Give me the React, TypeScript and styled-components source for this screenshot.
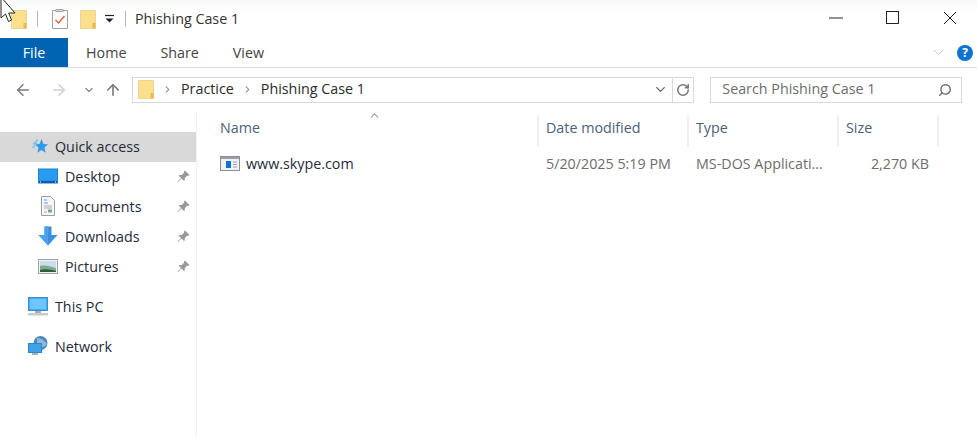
import styled, { createGlobalStyle } from 'styled-components';
import { ArrowLeft, ArrowRight, ArrowUp, ChevronDown, ChevronRight, ChevronUp, RotateCw, Search } from 'lucide-react';

const Global = createGlobalStyle`
  html, body { margin: 0; padding: 0; background: #fff; }
  body { font-family: "Open Sans", "Noto Sans", sans-serif; overflow: hidden; }
`;

const Window = styled.div`
  position: relative;
  width: 977px;
  height: 437px;
  overflow: hidden;
  color: #1c1c1c;
  font-size: 14.3px;
`;

const TitleBar = styled.div`
  height: 38px;
  display: flex;
  align-items: center;
  padding-left: 11px;
  background: linear-gradient(#f7fbf8, #fff 12px);
`;

const Sep = styled.span<{ $m: number }>`
  width: 1px;
  height: 16px;
  background: #b4b4b4;
  margin: 0 ${(p) => p.$m}px;
`;

const ToolSlot = styled.span<{ $w: number }>`
  width: ${(p) => p.$w}px;
  flex: none;
`;

const ToolDrop = styled.svg`
  margin-left: 8px;
`;

const Title = styled.span`
  color: #333;
  flex: 1;
  margin-bottom: 2px;
`;

const WinButtons = styled.div`
  display: flex;
  align-self: flex-start;
  height: 36px;
  align-items: center;
  margin-right: -1px;
`;

const WinButton = styled.div`
  width: 57px;
  display: flex;
  justify-content: center;
`;

const Ribbon = styled.div`
  height: 29px;
  display: flex;
  align-items: stretch;
  border-bottom: 1px solid #dadbdc;
`;

const FileTab = styled.div`
  width: 68px;
  margin-right: 1px;
  background: #0063b1;
  color: #fff;
  display: flex;
  align-items: center;
  justify-content: center;
  padding-bottom: 1px;
  height: 28px;
`;

const Tab = styled.div`
  padding: 0 17px 1px;
  display: flex;
  align-items: center;
  color: #444;
`;

const RibbonEnd = styled.div`
  margin-left: auto;
  display: flex;
  align-items: center;
  gap: 10px;
  padding-right: 4px;
`;

const Help = styled.span`
  width: 16px;
  height: 16px;
  border-radius: 50%;
  background: #0f72cf;
  color: #fff;
  font-size: 12px;
  font-weight: 700;
  line-height: 16px;
  text-align: center;
`;

const NavRow = styled.div`
  height: 43px;
  display: flex;
  align-items: center;
  padding: 0 15px 2px 14px;
`;

const NavIcons = styled.div`
  width: 118px;
  display: flex;
  align-items: center;
`;

const NavSlot = styled.span<{ $w: number }>`
  width: ${(p) => p.$w}px;
  display: flex;
`;

const AddressBox = styled.div`
  width: 563px;
  height: 26px;
  border: 1px solid #d9d9d9;
  display: flex;
  align-items: center;
  padding-left: 5px;
  box-sizing: border-box;
`;

const Crumb = styled.span`
  color: #2b2b2b;
  margin: 0 8px 2px;
`;

const AddressEnd = styled.div`
  margin-left: auto;
  display: flex;
  align-items: center;
  height: 100%;
`;

const RefreshCell = styled.span`
  width: 20px;
  height: 100%;
  border-left: 1px solid #d9d9d9;
  display: flex;
  align-items: center;
  justify-content: center;
  margin-left: 4px;
`;

const SearchBox = styled.div`
  width: 252px;
  height: 26px;
  margin-left: 16px;
  border: 1px solid #d9d9d9;
  box-sizing: border-box;
  display: flex;
  align-items: center;
  justify-content: space-between;
  padding: 0 9px 0 11px;
  color: #6d6d6d;
`;

const SearchText = styled.span`
  margin-bottom: 2px;
`;

const Body = styled.div`
  display: flex;
  height: 327px;
`;

const Sidebar = styled.div`
  width: 196px;
  border-right: 1px solid #f0f0f0;
  padding-top: 19px;
  flex: none;
`;

const NavGroup = styled.div`
  margin-bottom: 10px;
`;

const NavItem = styled.div<{ $active?: boolean; $indent: number }>`
  height: 30px;
  display: flex;
  align-items: center;
  padding-left: ${(p) => p.$indent}px;
  padding-right: 6px;
  padding-bottom: 2px;
  box-sizing: border-box;
  background: ${(p) => (p.$active ? '#d9d9d9' : 'transparent')};
  color: #1f2a3a;
  svg.nav-icon { margin-right: 7px; flex: none; }
`;

const Pin = styled.span`
  margin-left: auto;
  display: flex;
`;

const Content = styled.div`
  flex: 1;
  position: relative;
`;

const Columns = styled.div`
  display: grid;
  grid-template-columns: 326px 150px 150px 100px;
  margin-left: 16px;
`;

const HeaderRow = styled(Columns)`
  height: 32px;
  margin-top: 2px;
  align-items: stretch;
`;

const HeaderCell = styled.div`
  display: flex;
  align-items: center;
  padding: 0 0 8px 7px;
  color: #4c607a;
  border-right: 2px solid #f0f0f0;
`;

const SortArrow = styled.span`
  position: absolute;
  left: 171px;
  top: -4px;
  display: flex;
`;

const FileRow = styled(Columns)`
  height: 30px;
  margin-top: 1px;
  align-items: center;
`;

const FileName = styled.div`
  display: flex;
  align-items: center;
  gap: 6px;
  padding-left: 7px;
  color: #1f2a3a;
`;

const FileCell = styled.div<{ $right?: boolean }>`
  padding: ${(p) => (p.$right ? '0 10px 0 0' : '0 0 0 7px')};
  text-align: ${(p) => (p.$right ? 'right' : 'left')};
  color: #6d6d6d;
  white-space: nowrap;
`;

const Cursor = styled.svg`
  position: absolute;
  left: 0;
  top: 0;
`;

const FolderIcon = () => (
  <svg width="16" height="19" viewBox="0 0 16 19">
    <path d="M0.5 0.5H15.5V18.5H0.5Z" fill="#fbdf8d" stroke="#efd595" />
    <path d="M12.5 13V18.5H15.5V13Z" fill="#e9b949" />
  </svg>
);

const PinIcon = () => (
  <svg width="13" height="13" viewBox="0 0 13 13">
    <path d="M8 0.5L12.5 5L11 6L10 5.7L7.8 8.2L7.8 10.2L7 11L4.5 8.5L1 12L0.5 11.5L4 8L1.7 5.7L2.5 5L4.7 5L7 2.8L7 1.5Z" fill="#9a9a9a" />
  </svg>
);

const QuickIcon = () => (
  <svg className="nav-icon" width="16" height="16" viewBox="0 0 16 16">
    <path d="M9.500 1L11.500 6L16 6.300L12.500 9.600L13.600 14.700L9.500 12L5.400 14.700L6.500 9.600L3 6.300L7.500 6Z" fill="#2f9be8" />
    <path d="M6 1.500L2 5.500H4.500L0.500 10" stroke="#7cc0f0" strokeWidth="1.500" fill="none" />
  </svg>
);

const DesktopIcon = () => (
  <svg className="nav-icon" width="20" height="16" viewBox="0 0 20 16">
    <rect x="0" y="0.5" width="20" height="15" fill="#1d7fd6" />
    <rect x="1" y="1.5" width="18" height="11" fill="#2a9cf0" />
    <rect x="1" y="13" width="18" height="2" fill="#0e5ea8" />
    <rect x="2" y="13.5" width="1" height="1" fill="#fff" />
    <rect x="17" y="13.5" width="1" height="1" fill="#fff" />
  </svg>
);

const DocumentIcon = () => (
  <svg className="nav-icon" width="20" height="20" viewBox="0 0 20 20">
    <path d="M3.5 0.5H12.5L16.5 4.5V19.5H3.5Z" fill="#f4f6f8" stroke="#9a9ea3" />
    <path d="M6 4H9M6 7H10" stroke="#4aa3e8" strokeWidth="1.2" />
    <path d="M6 10H14M6 12H14M6 16H9" stroke="#a5abb0" />
    <rect x="10" y="13.5" width="4" height="3" fill="#7ba592" />
  </svg>
);

const DownloadIcon = () => (
  <svg className="nav-icon" width="20" height="20" viewBox="0 0 20 20">
    <path d="M6.5 0.5H13.5V9H19.5L10 19.5L0.5 9H6.5Z" fill="#3b8fe0" />
    <path d="M6.5 0.5H10V19.5L0.5 9H6.5Z" fill="#4aa2ee" />
  </svg>
);

const PicturesIcon = () => (
  <svg className="nav-icon" width="20" height="15" viewBox="0 0 20 15">
    <rect x="0.5" y="0.5" width="19" height="14" fill="#f1f1f1" stroke="#a0a4a8" />
    <rect x="2" y="2" width="16" height="6" fill="#c7dfec" />
    <path d="M2 7C7 6 12 7 18 9V13H2Z" fill="#7fa88c" />
    <path d="M2 11C8 9.500 13 11 18 12V13H2Z" fill="#2f5b43" />
  </svg>
);

const PcIcon = () => (
  <svg className="nav-icon" width="20" height="19" viewBox="0 0 20 19">
    <rect x="0.5" y="0.5" width="19" height="13" fill="#45aaf0" stroke="#3b8fcb" />
    <rect x="2" y="2" width="16" height="10" fill="#6cc6fb" />
    <rect x="7" y="14" width="6" height="2" fill="#a8b0b8" />
    <rect x="0" y="16" width="20" height="2.5" fill="#c5cbd0" />
  </svg>
);

const NetworkIcon = () => (
  <svg className="nav-icon" width="20" height="20" viewBox="0 0 20 20">
    <circle cx="12.5" cy="7" r="7" fill="#4f87bb" />
    <path d="M9 2C13 2 16 4 19 8C16 12 13 12 9 10Z" fill="#8dbbdf" />
    <rect x="0.5" y="7.5" width="13" height="9" fill="#3ea2ea" stroke="#2e86c8" />
    <rect x="4" y="17" width="6" height="2" fill="#a8b0b8" />
  </svg>
);

const AppIcon = () => (
  <svg width="20" height="15" viewBox="0 0 20 15">
    <rect x="0.5" y="0.5" width="19" height="14" fill="#eef0f2" stroke="#8a8f94" />
    <rect x="1" y="1" width="18" height="2" fill="#9aa0a6" />
    <rect x="6" y="5" width="5" height="7" fill="#0f6fd6" />
    <path d="M13 6H17M13 8.500H17M13 11H17" stroke="#a0a5aa" />
  </svg>
);

const PropsIcon = () => (
  <svg width="16" height="20" viewBox="0 0 16 20">
    <path d="M0.5 1.5H15.500V19.500H0.5Z" fill="#fbfbfb" stroke="#a2a2a2" />
    <rect x="4" y="0.500" width="7" height="2" fill="#dcdcdc" stroke="#a2a2a2" />
    <path d="M3.500 11L6.500 14L12.500 7" stroke="#e8693f" strokeWidth="1.500" fill="none" />
  </svg>
);

const pinnedPlaces = [
  { name: 'Desktop', icon: <DesktopIcon /> },
  { name: 'Documents', icon: <DocumentIcon /> },
  { name: 'Downloads', icon: <DownloadIcon /> },
  { name: 'Pictures', icon: <PicturesIcon /> },
];

const App = () => {
  return (
    <Window>
      <Global />
      <TitleBar>
        <FolderIcon />
        <Sep $m={10} />
        <ToolSlot $w={4} />
        <PropsIcon />
        <ToolSlot $w={12} />
        <FolderIcon />
        <ToolDrop width="12" height="10" viewBox="0 0 12 10">
          <path d="M1 1.500H10" stroke="#222" strokeWidth="1.200" />
          <path d="M1.500 4.500H9.500L5.500 8.500Z" fill="#222" />
        </ToolDrop>
        <Sep $m={9} />
        <Title>Phishing Case 1</Title>
        <WinButtons>
          <WinButton>
            <svg width="14" height="2" viewBox="0 0 14 2"><path d="M0 1H14" stroke="#222" /></svg>
          </WinButton>
          <WinButton>
            <svg width="14" height="14" viewBox="0 0 14 14"><rect x="0.5" y="0.5" width="12" height="12" fill="none" stroke="#222" /></svg>
          </WinButton>
          <WinButton>
            <svg width="14" height="14" viewBox="0 0 14 14"><path d="M1 1L13 13M13 1L1 13" stroke="#222" /></svg>
          </WinButton>
        </WinButtons>
      </TitleBar>

      <Ribbon>
        <FileTab>File</FileTab>
        <Tab>Home</Tab>
        <Tab>Share</Tab>
        <Tab>View</Tab>
        <RibbonEnd>
          <ChevronDown size={17} color="#c4c8cc" strokeWidth={1.4} />
          <Help>?</Help>
        </RibbonEnd>
      </Ribbon>

      <NavRow>
        <NavIcons>
          <NavSlot $w={36}><ArrowLeft size={18} color="#7b7b7b" strokeWidth={2} /></NavSlot>
          <NavSlot $w={33}><ArrowRight size={18} color="#cfcfcf" strokeWidth={2} /></NavSlot>
          <NavSlot $w={21}><ChevronDown size={12} color="#8a8a8a" strokeWidth={2.5} /></NavSlot>
          <NavSlot $w={28}><ArrowUp size={18} color="#7b7b7b" strokeWidth={2.2} /></NavSlot>
        </NavIcons>
        <AddressBox>
          <FolderIcon />
          <ChevronRight size={11} color="#777" strokeWidth={2.2} style={{ marginLeft: 8 }} />
          <Crumb>Practice</Crumb>
          <ChevronRight size={11} color="#777" strokeWidth={2.2} />
          <Crumb>Phishing Case 1</Crumb>
          <AddressEnd>
            <ChevronDown size={15} color="#666" strokeWidth={2.2} />
            <RefreshCell><RotateCw size={14} color="#777" strokeWidth={2.6} /></RefreshCell>
          </AddressEnd>
        </AddressBox>
        <SearchBox>
          <SearchText>Search Phishing Case 1</SearchText>
          <Search size={14} color="#6e6e6e" strokeWidth={2.4} style={{ transform: 'scaleX(-1)' }} />
        </SearchBox>
      </NavRow>

      <Body>
        <Sidebar>
          <NavGroup>
            <NavItem $active $indent={32}>
              <QuickIcon />
              Quick access
            </NavItem>
            {pinnedPlaces.map((place) => (
              <NavItem key={place.name} $indent={38}>
                {place.icon}
                {place.name}
                <Pin><PinIcon /></Pin>
              </NavItem>
            ))}
          </NavGroup>
          <NavGroup>
            <NavItem $indent={28}><PcIcon />This PC</NavItem>
          </NavGroup>
          <NavGroup>
            <NavItem $indent={28}><NetworkIcon />Network</NavItem>
          </NavGroup>
        </Sidebar>
        <Content>
          <SortArrow><ChevronUp size={13} color="#9a9a9a" strokeWidth={2} /></SortArrow>
          <HeaderRow>
            <HeaderCell>Name</HeaderCell>
            <HeaderCell>Date modified</HeaderCell>
            <HeaderCell>Type</HeaderCell>
            <HeaderCell>Size</HeaderCell>
          </HeaderRow>
          <FileRow>
            <FileName><AppIcon />www.skype.com</FileName>
            <FileCell>5/20/2025 5:19 PM</FileCell>
            <FileCell>MS-DOS Applicati...</FileCell>
            <FileCell $right>2,270 KB</FileCell>
          </FileRow>
        </Content>
      </Body>

      <Cursor width="17" height="26" viewBox="0 0 17 26">
        <path d="M1 -3V18L5.500 14L8.500 21.500L11.500 20L8.700 13H15Z" fill="#fff" stroke="#222" />
      </Cursor>
    </Window>
  );
};

export default App;
